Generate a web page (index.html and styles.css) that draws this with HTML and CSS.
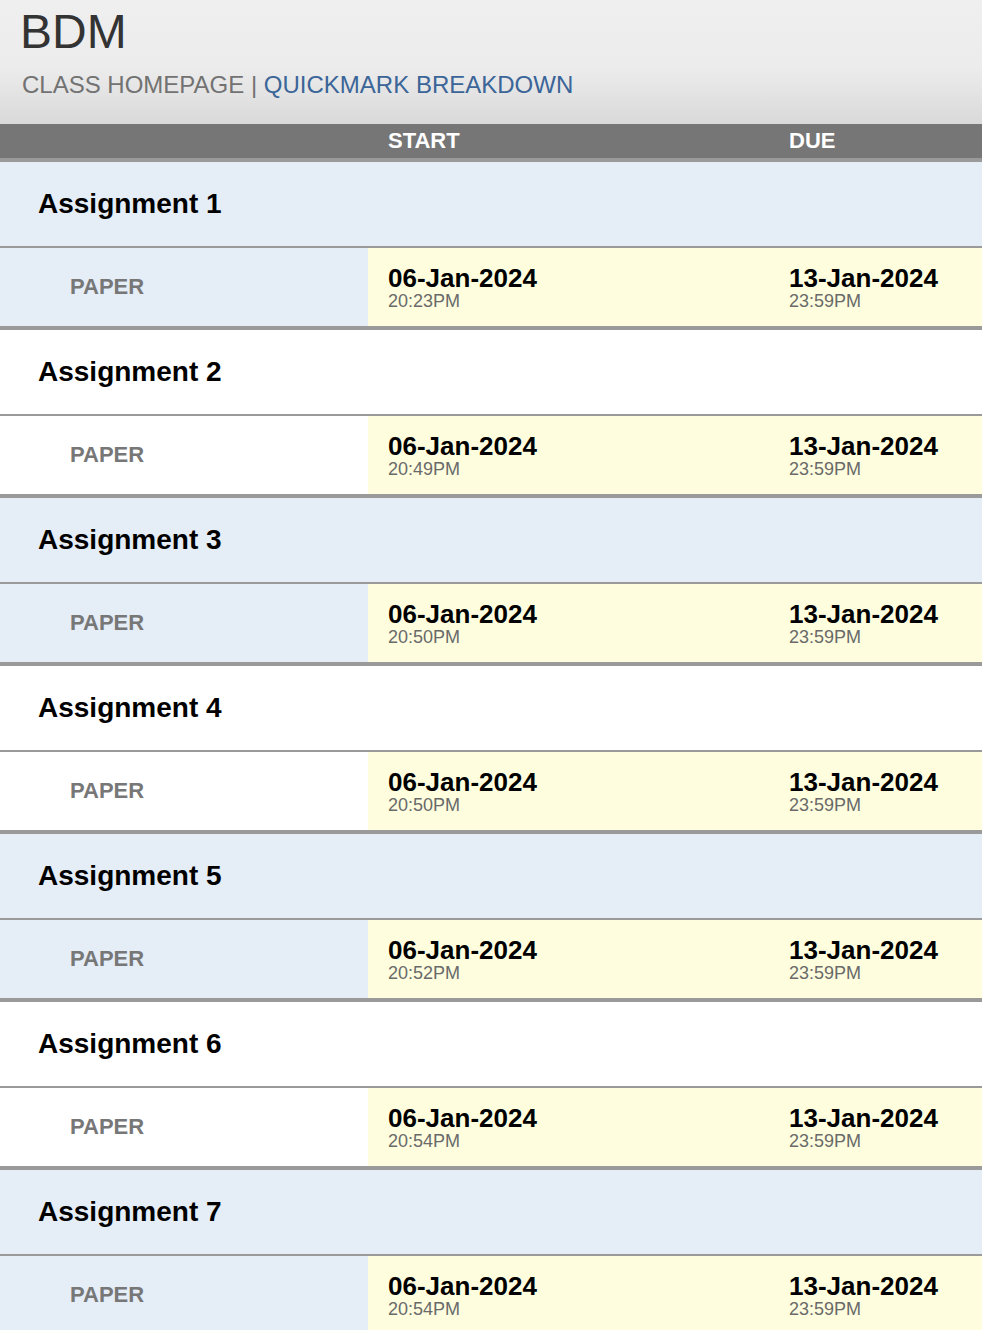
FILE: index.html
```html
<!DOCTYPE html>
<html lang="en">
<head>
<meta charset="utf-8">
<title>BDM - Class Homepage</title>
<link rel="stylesheet" href="styles.css">
</head>
<body>
<header class="page-header">
  <h1 class="class-title">BDM</h1>
  <nav class="crumbs"><span class="crumb">CLASS HOMEPAGE</span> | <a class="crumb-link" href="#">QUICKMARK BREAKDOWN</a></nav>
</header>
<section class="assignments">
  <div class="table-head">
    <div class="th th-name"></div>
    <div class="th">START</div>
    <div class="th">DUE</div>
  </div>

  <div class="assignment odd">
    <div class="a-title">Assignment 1</div>
    <div class="a-row">
      <div class="a-type">PAPER</div>
      <div class="a-date"><div class="d-day">06-Jan-2024</div><div class="d-time">20:23PM</div></div>
      <div class="a-date"><div class="d-day">13-Jan-2024</div><div class="d-time">23:59PM</div></div>
    </div>
  </div>

  <div class="assignment even">
    <div class="a-title">Assignment 2</div>
    <div class="a-row">
      <div class="a-type">PAPER</div>
      <div class="a-date"><div class="d-day">06-Jan-2024</div><div class="d-time">20:49PM</div></div>
      <div class="a-date"><div class="d-day">13-Jan-2024</div><div class="d-time">23:59PM</div></div>
    </div>
  </div>

  <div class="assignment odd">
    <div class="a-title">Assignment 3</div>
    <div class="a-row">
      <div class="a-type">PAPER</div>
      <div class="a-date"><div class="d-day">06-Jan-2024</div><div class="d-time">20:50PM</div></div>
      <div class="a-date"><div class="d-day">13-Jan-2024</div><div class="d-time">23:59PM</div></div>
    </div>
  </div>

  <div class="assignment even">
    <div class="a-title">Assignment 4</div>
    <div class="a-row">
      <div class="a-type">PAPER</div>
      <div class="a-date"><div class="d-day">06-Jan-2024</div><div class="d-time">20:50PM</div></div>
      <div class="a-date"><div class="d-day">13-Jan-2024</div><div class="d-time">23:59PM</div></div>
    </div>
  </div>

  <div class="assignment odd">
    <div class="a-title">Assignment 5</div>
    <div class="a-row">
      <div class="a-type">PAPER</div>
      <div class="a-date"><div class="d-day">06-Jan-2024</div><div class="d-time">20:52PM</div></div>
      <div class="a-date"><div class="d-day">13-Jan-2024</div><div class="d-time">23:59PM</div></div>
    </div>
  </div>

  <div class="assignment even">
    <div class="a-title">Assignment 6</div>
    <div class="a-row">
      <div class="a-type">PAPER</div>
      <div class="a-date"><div class="d-day">06-Jan-2024</div><div class="d-time">20:54PM</div></div>
      <div class="a-date"><div class="d-day">13-Jan-2024</div><div class="d-time">23:59PM</div></div>
    </div>
  </div>

  <div class="assignment odd">
    <div class="a-title">Assignment 7</div>
    <div class="a-row">
      <div class="a-type">PAPER</div>
      <div class="a-date"><div class="d-day">06-Jan-2024</div><div class="d-time">20:54PM</div></div>
      <div class="a-date"><div class="d-day">13-Jan-2024</div><div class="d-time">23:59PM</div></div>
    </div>
  </div>
</section>
</body>
</html>
```

FILE: styles.css
```css
html, body {
  margin: 0;
  padding: 0;
  background: #ffffff;
}

body {
  font-family: "Liberation Sans", Arial, Helvetica, sans-serif;
  color: #000;
}

.page-header {
  height: 124px;
  box-sizing: border-box;
  padding: 8px 0 0 22px;
  background: linear-gradient(to bottom, #efefef 0%, #ececec 55%, #d9d9d9 100%);
}

.class-title {
  margin: 0 0 17px -2px;
  font-size: 48px;
  line-height: 48px;
  font-weight: normal;
  color: #333333;
}

.crumbs {
  font-size: 24px;
  line-height: 24px;
  color: #727272;
}

.crumb-link {
  color: #3b6598;
  text-decoration: none;
}

.table-head {
  display: grid;
  grid-template-columns: 368px 401px 1fr;
  height: 34px;
  background: #767676;
  border-bottom: 4px solid #9a9a9a;
}

.th {
  padding-left: 20px;
  font-size: 22px;
  line-height: 34px;
  font-weight: bold;
  color: #ffffff;
}

.th-name {
  padding-left: 0;
}

.assignment.odd {
  background: #e5edf7;
}

.assignment.even {
  background: #ffffff;
}

.a-title {
  height: 84px;
  display: flex;
  align-items: center;
  padding-left: 38px;
  font-size: 28px;
  font-weight: bold;
  border-bottom: 2px solid #9a9a9a;
}

.a-row {
  display: grid;
  grid-template-columns: 368px 401px 1fr;
  height: 78px;
  border-bottom: 4px solid #9a9a9a;
}

.a-type {
  display: flex;
  align-items: center;
  padding-left: 70px;
  font-size: 22px;
  font-weight: bold;
  color: #777777;
}

.a-date {
  display: flex;
  flex-direction: column;
  justify-content: center;
  padding: 2px 0 0 20px;
  background: #fefedf;
}

.d-day {
  font-size: 26px;
  line-height: 26px;
  font-weight: bold;
  color: #000000;
}

.d-time {
  font-size: 18px;
  line-height: 20px;
  color: #6a6a6a;
}
```
